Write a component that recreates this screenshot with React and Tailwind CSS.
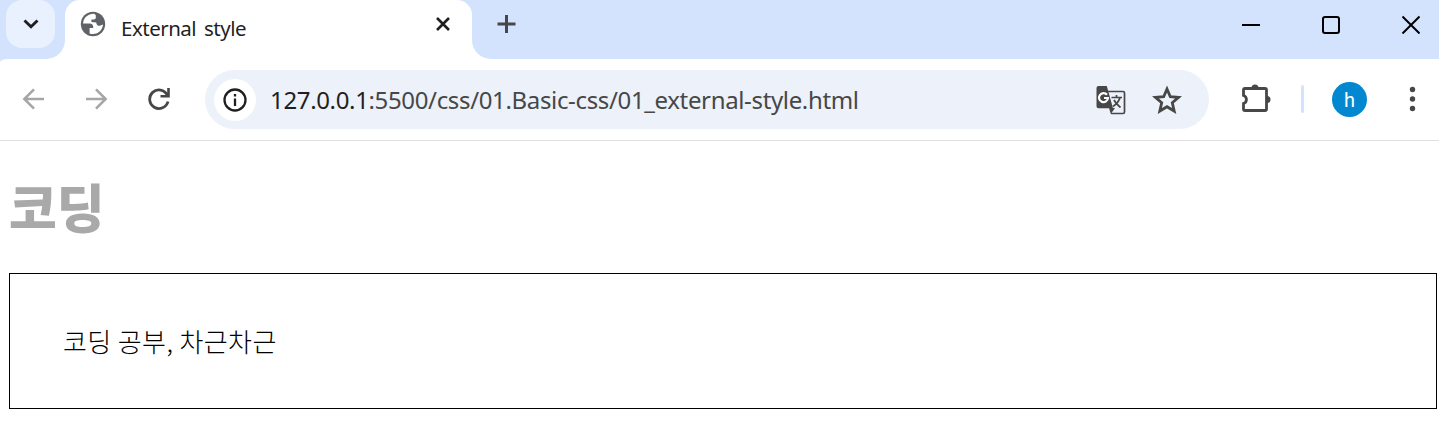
import React from "react";

const ink = "#474747";

function Globe() {
  return (
    <svg className="h-[26px] w-[26px]" viewBox="0 0 26 26">
      <circle cx="13" cy="13" r="12.2" fill="#5f6368" />
      <path d="M14.500 2.900C8.500 2.500 4.300 6.200 3.200 11.200L3 12.400h6.600c2.400 0 3.600 1.400 3.600 3.200v1.400h-3.600v5.400c1 .5 2.200.7 3.400.7 4.800 0 8.600-3.200 9.800-8l.3-1.700-3.300 1.400c-2.200 0-3.300-1.200-3.600-3.400l-4.800-.4V8.400h2.400c1.300 0 2-.8 2-2V4.200z" fill="white" />
    </svg>
  );
}

function Translate() {
  return (
    <svg className="h-[30px] w-[30px]" viewBox="0 0 30 30" fill="none">
      <path d="M12 6.500h15a1.500 1.500 0 0 1 1.500 1.500v19a1.500 1.500 0 0 1-1.500 1.500H15" stroke={ink} strokeWidth="1.700" />
      <path d="M2.500 1h8.300L17 23.200H2.500A2 2 0 0 1 .5 21.200V3a2 2 0 0 1 2-2z" fill={ink} />
      <path d="M13 23h6l-4.200 6z" fill={ink} />
      <path d="M11 9.800A4.500 4.500 0 1 0 12 13H8" stroke="white" strokeWidth="2.200" />
      <path d="M15.500 12.500H26M20.500 10v2.500M24 12.500c-.8 3.500-3.500 6.500-7 9M18 15c1.500 3 4 5.500 6.500 7.500" stroke={ink} strokeWidth="1.700" />
    </svg>
  );
}

function TabStrip() {
  return (
    <div className="flex h-[59px] bg-white">
      <div className="h-[59px] w-[65px] rounded-br-[19px] bg-[#d3e3fd] pl-[6px]">
        <button className="flex h-[48px] w-[49px] items-center justify-center rounded-[16px] bg-[#e9f1fe]">
          <svg className="h-[10px] w-[16px]" viewBox="0 0 16 10" fill="none"><path d="M1.500 1.500 8 7.700l6.500-6.200" stroke="#1f1f1f" strokeWidth="2.900" /></svg>
        </button>
      </div>
      <div className="h-[40px] w-[407px] bg-[#d3e3fd]">
        <div className="flex h-[40px] rounded-t-[15px] bg-white pl-[15px] pt-[11px]">
          <Globe />
          <span className="ml-[15px] mt-[4px] w-[300px] whitespace-nowrap font-['Noto_Sans','Open_Sans',sans-serif] text-[20.500px] leading-[26px] tracking-[-0.500px] text-[#1f1f1f] [word-spacing:3px]">External style</span>
          <svg className="ml-[14px] mt-[5px] h-[16px] w-[16px]" viewBox="0 0 16 16"><path d="m2 2 12 12M14 2 2 14" stroke="#1f1f1f" strokeWidth="2.600" /></svg>
        </div>
      </div>
      <div className="flex flex-1 rounded-bl-[19px] bg-[#d3e3fd] pl-[25px]">
        <svg className="mt-[15px] h-[18px] w-[19px]" viewBox="0 0 19 18"><path d="M9.500 0v18M.5 9h18" stroke={ink} strokeWidth="3" /></svg>
        <div className="ml-auto flex pr-[19px] pt-[15px]">
          <svg className="mr-[61px] h-[19px] w-[19px]" viewBox="0 0 19 19"><path d="M1 10h18" stroke="black" strokeWidth="2" /></svg>
          <svg className="mr-[61px] h-[19px] w-[19px]" viewBox="0 0 19 19"><rect x="2" y="2" width="16" height="16" rx="2" fill="none" stroke="black" strokeWidth="2" /></svg>
          <svg className="h-[19px] w-[19px]" viewBox="0 0 19 19"><path d="m1.500 1.500 17 17M18.500 1.500l-17 17" stroke="black" strokeWidth="2" /></svg>
        </div>
      </div>
    </div>
  );
}

function Toolbar() {
  return (
    <div className="bg-[#d3e3fd]">
      <div className="flex h-[82px] items-center rounded-tl-[8px_3px] border-b border-[#dfdfdf] bg-white pl-[22px]">
        <svg className="-mt-[2px] h-[22px] w-[22px]" viewBox="0 0 22 22" fill="none"><path d="M22 11H2.500M12 1.300 2.300 11l9.700 9.700" stroke="#a6a6a6" strokeWidth="2.500" /></svg>
        <svg className="-mt-[2px] ml-[42px] h-[22px] w-[22px]" viewBox="0 0 22 22" fill="none"><path d="M0 11h19.500M10 1.300l9.700 9.700-9.700 9.700" stroke="#a6a6a6" strokeWidth="2.500" /></svg>
        <svg className="-mt-[2px] ml-[39px] h-[24px] w-[24px]" viewBox="0 0 24 24" fill="none"><path d="M20.300 8A9.300 9.300 0 1 0 21 14.500" stroke={ink} strokeWidth="2.800" /><path d="M22.800 1v9.600H13.500V7.900h5.300L20.200 6V1z" fill={ink} /></svg>
        <div className="ml-[34px] flex h-[59px] w-[1004px] items-center rounded-full bg-[#ecf1fa] pl-[9px]">
          <div className="flex h-[42px] w-[42px] items-center justify-center rounded-full bg-white">
            <svg className="h-[24px] w-[24px]" viewBox="0 0 24 24" fill="none"><circle cx="12" cy="12" r="10.500" stroke="#1f1f1f" strokeWidth="2.300" /><path d="M12 10.500V18M12 6v2.500" stroke="#1f1f1f" strokeWidth="2.300" /></svg>
          </div>
          <span className="ml-[14px] w-[826px] whitespace-nowrap font-['Noto_Sans','Open_Sans',sans-serif] text-[24px] leading-[32px] tracking-[-0.350px] text-[#474747]"><span className="text-[#1f1f1f]">127.0.0.1</span>:5500/css/01.Basic-css/01_external-style.html</span>
          <Translate />
          <svg className="ml-[26px] h-[30px] w-[30px]" viewBox="0 0 30 30" fill="none"><path d="m15 4 3.300 7.700 8.300.7-6.300 5.400 1.900 8.200-7.200-4.300L7.800 26l1.900-8.200-6.300-5.400 8.300-.7z" stroke={ink} strokeWidth="2.800" /></svg>
        </div>
        <svg className="-mt-[3px] ml-[32px] h-[30px] w-[32px]" viewBox="0 0 32 30"><path d="M4 5.500h20a1.500 1.500 0 0 1 1.500 1.500v19a1.500 1.500 0 0 1-1.500 1.500H4A1.500 1.500 0 0 1 2.500 26v-5.500a4.200 4.200 0 0 0 0-8V7A1.500 1.500 0 0 1 4 5.500z" fill="none" stroke={ink} strokeWidth="2.800" /><path d="M10.500 5a3.500 3.500 0 0 1 7 0zM26 13a3.500 3.500 0 0 1 0 7z" fill={ink} /></svg>
        <div className="-mt-[2px] ml-[28px] h-[28px] w-[3px] rounded-full bg-[#d3e3fd]" />
        <div className="ml-[28px] flex h-[35px] w-[35px] items-center justify-center rounded-full bg-[#0288d1] font-['Roboto',sans-serif] text-[20px] leading-[24px] text-white">h</div>
        <svg className="-mt-[2px] ml-[41px] h-[26px] w-[8px]" viewBox="0 0 8 26" fill={ink}><circle cx="4.500" cy="3.500" r="2.700" /><circle cx="4.500" cy="13" r="2.700" /><circle cx="4.500" cy="22.500" r="2.700" /></svg>
      </div>
    </div>
  );
}

export default function App() {
  return (
    <div className="h-[431px] w-[1439px] overflow-hidden bg-white">
      <TabStrip />
      <Toolbar />
      <main className="pl-[9px] pr-[2px] pt-[29px]">
        <h1 className="h-[103px] whitespace-nowrap font-['Noto_Sans_CJK_KR',sans-serif] text-[52px] font-black leading-[72px] text-[#a9a9a9]">코딩</h1>
        <div className="h-[136px] border border-black pl-[53px] pt-[49px]">
          <p className="whitespace-nowrap font-['Noto_Sans_CJK_KR',sans-serif] text-[26px] font-light leading-[36px] tracking-[0.400px] text-black">코딩 공부, 차근차근</p>
        </div>
      </main>
    </div>
  );
}
